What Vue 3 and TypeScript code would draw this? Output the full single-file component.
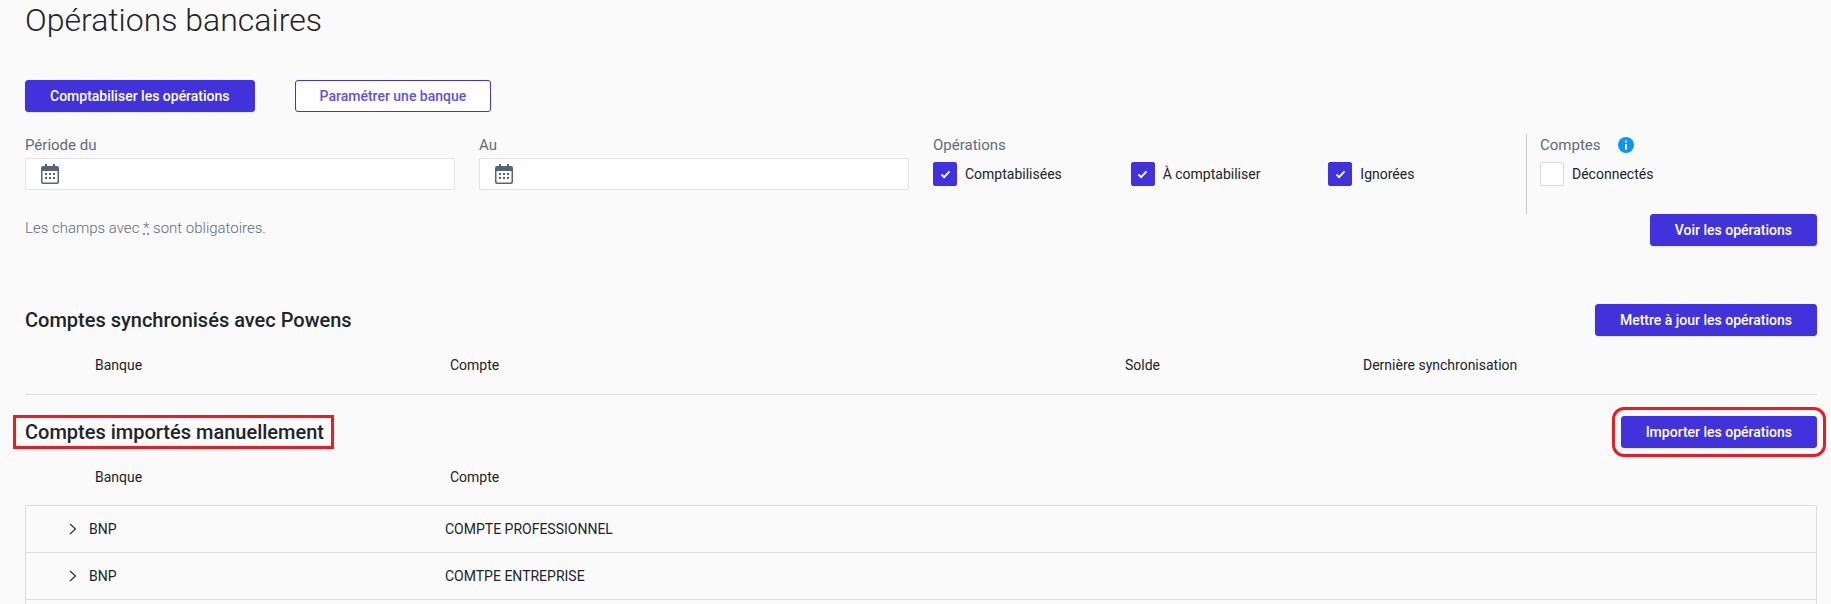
<script setup lang="ts">
const syncColumns = ['Banque', 'Compte', 'Solde', 'Dernière synchronisation']
const operations = [
  { label: 'Comptabilisées', checked: true },
  { label: 'À comptabiliser', checked: true },
  { label: 'Ignorées', checked: true },
]
const accounts = [
  { bank: 'BNP', name: 'COMPTE PROFESSIONNEL' },
  { bank: 'BNP', name: 'COMTPE ENTREPRISE' },
  { bank: '', name: '' },
]
</script>

<template>
  <div class="page">
    <h1 class="title">Opérations bancaires</h1>

    <div class="actions">
      <button class="btn primary">Comptabiliser les opérations</button>
      <button class="btn outline">Paramétrer une banque</button>
    </div>

    <div class="filters">
      <div class="field">
        <label class="label">Période du</label>
        <div class="input">
          <svg class="cal" viewBox="0 0 18 20" width="18" height="20">
            <path fill="#56647a" d="M4 0h2v2h6V0h2v2h2a2 2 0 0 1 2 2v14a2 2 0 0 1-2 2H2a2 2 0 0 1-2-2V4a2 2 0 0 1 2-2h2z" />
            <path fill="#fff" d="M1.500 7h15v10.500a1 1 0 0 1-1 1h-13a1 1 0 0 1-1-1z" />
            <path fill="#56647a" d="M4 9h2v2H4zM8 9h2v2H8zM12 9h2v2h-2zM4 13h2v2H4zM8 13h2v2H8zM12 13h2v2h-2z" />
          </svg>
        </div>
      </div>
      <div class="field">
        <label class="label">Au</label>
        <div class="input">
          <svg class="cal" viewBox="0 0 18 20" width="18" height="20">
            <path fill="#56647a" d="M4 0h2v2h6V0h2v2h2a2 2 0 0 1 2 2v14a2 2 0 0 1-2 2H2a2 2 0 0 1-2-2V4a2 2 0 0 1 2-2h2z" />
            <path fill="#fff" d="M1.500 7h15v10.500a1 1 0 0 1-1 1h-13a1 1 0 0 1-1-1z" />
            <path fill="#56647a" d="M4 9h2v2H4zM8 9h2v2H8zM12 9h2v2h-2zM4 13h2v2H4zM8 13h2v2H8zM12 13h2v2h-2z" />
          </svg>
        </div>
      </div>
      <div class="group ops">
        <span class="label">Opérations</span>
        <div class="checks">
          <label v-for="op in operations" :key="op.label" class="check">
            <span class="box on">
              <svg viewBox="0 0 12 10" width="11" height="9"><path d="M1.500 5l3 3 6-6.500" fill="none" stroke="#fff" stroke-width="2" /></svg>
            </span>
            {{ op.label }}
          </label>
        </div>
      </div>
      <div class="group accounts-filter">
        <span class="label">Comptes
          <svg class="info" viewBox="0 0 16 16" width="16" height="16">
            <circle cx="8" cy="8" r="8" fill="#0a96f5" />
            <rect x="7" y="7" width="2" height="5.500" fill="#fff" />
            <rect x="7" y="3.500" width="2" height="2" fill="#fff" />
          </svg>
        </span>
        <label class="check">
          <span class="box"></span>
          Déconnectés
        </label>
      </div>
    </div>

    <div class="note-row">
      <p class="note">Les champs avec <abbr>*</abbr> sont obligatoires.</p>
      <button class="btn primary">Voir les opérations</button>
    </div>

    <section class="sync">
      <div class="section-head">
        <h2 class="heading">Comptes synchronisés avec Powens</h2>
        <button class="btn primary">Mettre à jour les opérations</button>
      </div>
      <div class="cols sync-cols">
        <span v-for="c in syncColumns" :key="c">{{ c }}</span>
      </div>
    </section>

    <section class="manual">
      <div class="section-head">
        <h2 class="heading marked">Comptes importés manuellement</h2>
        <button class="btn primary marked-btn">Importer les opérations</button>
      </div>
      <div class="cols manual-cols">
        <span>Banque</span>
        <span>Compte</span>
      </div>
      <div class="list">
        <div v-for="(a, i) in accounts" :key="i" class="row">
          <svg v-if="a.bank" class="chev" viewBox="0 0 8 12" width="8" height="12"><path d="M1 1l5.500 5L1 11" fill="none" stroke="#333" stroke-width="1.200" /></svg>
          <span class="bank">{{ a.bank }}</span>
          <span>{{ a.name }}</span>
        </div>
      </div>
    </section>
  </div>
</template>

<style>
html, body {
  margin: 0;
  background: #fafafa;
  overflow: hidden;
}
</style>

<style scoped>
.page {
  box-sizing: border-box;
  height: 604px;
  overflow: hidden;
  padding: 0 14px 0 25px;
  font-family: Roboto, "Liberation Sans", sans-serif;
  color: #212529;
  background: #fafafa;
}
.title {
  margin: 0;
  height: 40px;
  font-size: 32px;
  line-height: 40px;
  font-weight: 300;
}
.actions {
  display: flex;
  gap: 40px;
  margin-top: 40px;
}
.btn {
  box-sizing: border-box;
  height: 32px;
  padding: 0 24px;
  border: 1px solid #4232db;
  border-radius: 3px;
  font: 500 14px/30px Roboto, sans-serif;
  white-space: nowrap;
}
.primary {
  background: #4232db;
  color: #fff;
  box-shadow: 0 1px 2px rgba(0, 0, 0, 0.1);
}
.outline {
  background: #fff;
  color: #6350e8;
}
.filters {
  display: flex;
  margin-top: 22px;
  height: 80px;
}
.field {
  width: 430px;
  margin-right: 24px;
}
.label {
  display: block;
  height: 24px;
  font-size: 15px;
  line-height: 22px;
  color: #5f6b7c;
}
.input {
  box-sizing: border-box;
  height: 32px;
  display: flex;
  align-items: center;
  padding-left: 15px;
  background: #fff;
  border: 1px solid #e2e2e2;
  border-radius: 2px;
}
.ops {
  width: 593px;
}
.checks {
  display: flex;
}
.checks .check {
  width: 202px;
}
.check {
  display: flex;
  align-items: center;
  gap: 8px;
  height: 32px;
  font-size: 14px;
  color: #212529;
}
.box {
  box-sizing: border-box;
  width: 24px;
  height: 24px;
  display: flex;
  align-items: center;
  justify-content: center;
  background: #fff;
  border: 1px solid #d8d8d8;
  border-radius: 2px;
}
.box.on {
  background: #4232db;
  border-color: #4232db;
}
.accounts-filter {
  border-left: 1px solid #c8c8c8;
  padding-left: 13px;
}
.info {
  margin-left: 14px;
  vertical-align: -3px;
}
.note-row {
  display: flex;
  justify-content: space-between;
  align-items: flex-start;
}
.note {
  margin: 5px 0 0;
  font-size: 15px;
  line-height: 18px;
  font-weight: 300;
  color: #5f6b7c;
}
.note abbr {
  text-decoration: underline dotted;
}
.sync {
  margin-top: 58px;
}
.section-head {
  display: flex;
  justify-content: space-between;
  align-items: center;
  height: 32px;
}
.heading {
  margin: 0;
  font-size: 20px;
  line-height: 28px;
  font-weight: 500;
}
.cols {
  display: grid;
  font-size: 14px;
  padding-left: 70px;
  align-items: center;
}
.sync-cols {
  grid-template-columns: 355px 675px 238px 1fr;
  height: 58px;
  border-bottom: 1px solid #ddd;
}
.manual {
  margin-top: 21px;
}
.manual-cols {
  grid-template-columns: 355px 1fr;
  height: 57px;
}
.marked {
  padding: 0 7px 0 9px;
  margin-left: -9px;
  outline: 3px solid #ed1c24;
}
.marked-btn {
  outline: 3px solid #ed1c24;
  outline-offset: 6px;
}
.list {
  border: 1px solid #ddd;
  border-bottom: 0;
  border-radius: 2px 2px 0 0;
}
.row {
  box-sizing: border-box;
  height: 47px;
  display: grid;
  grid-template-columns: 51px 12px 356px 1fr;
  align-items: center;
  font-size: 14px;
  border-bottom: 1px solid #ddd;
}
.chev {
  grid-column: 1;
  justify-self: end;
}
.bank {
  grid-column: 3;
  padding-left: 0;
}
</style>
